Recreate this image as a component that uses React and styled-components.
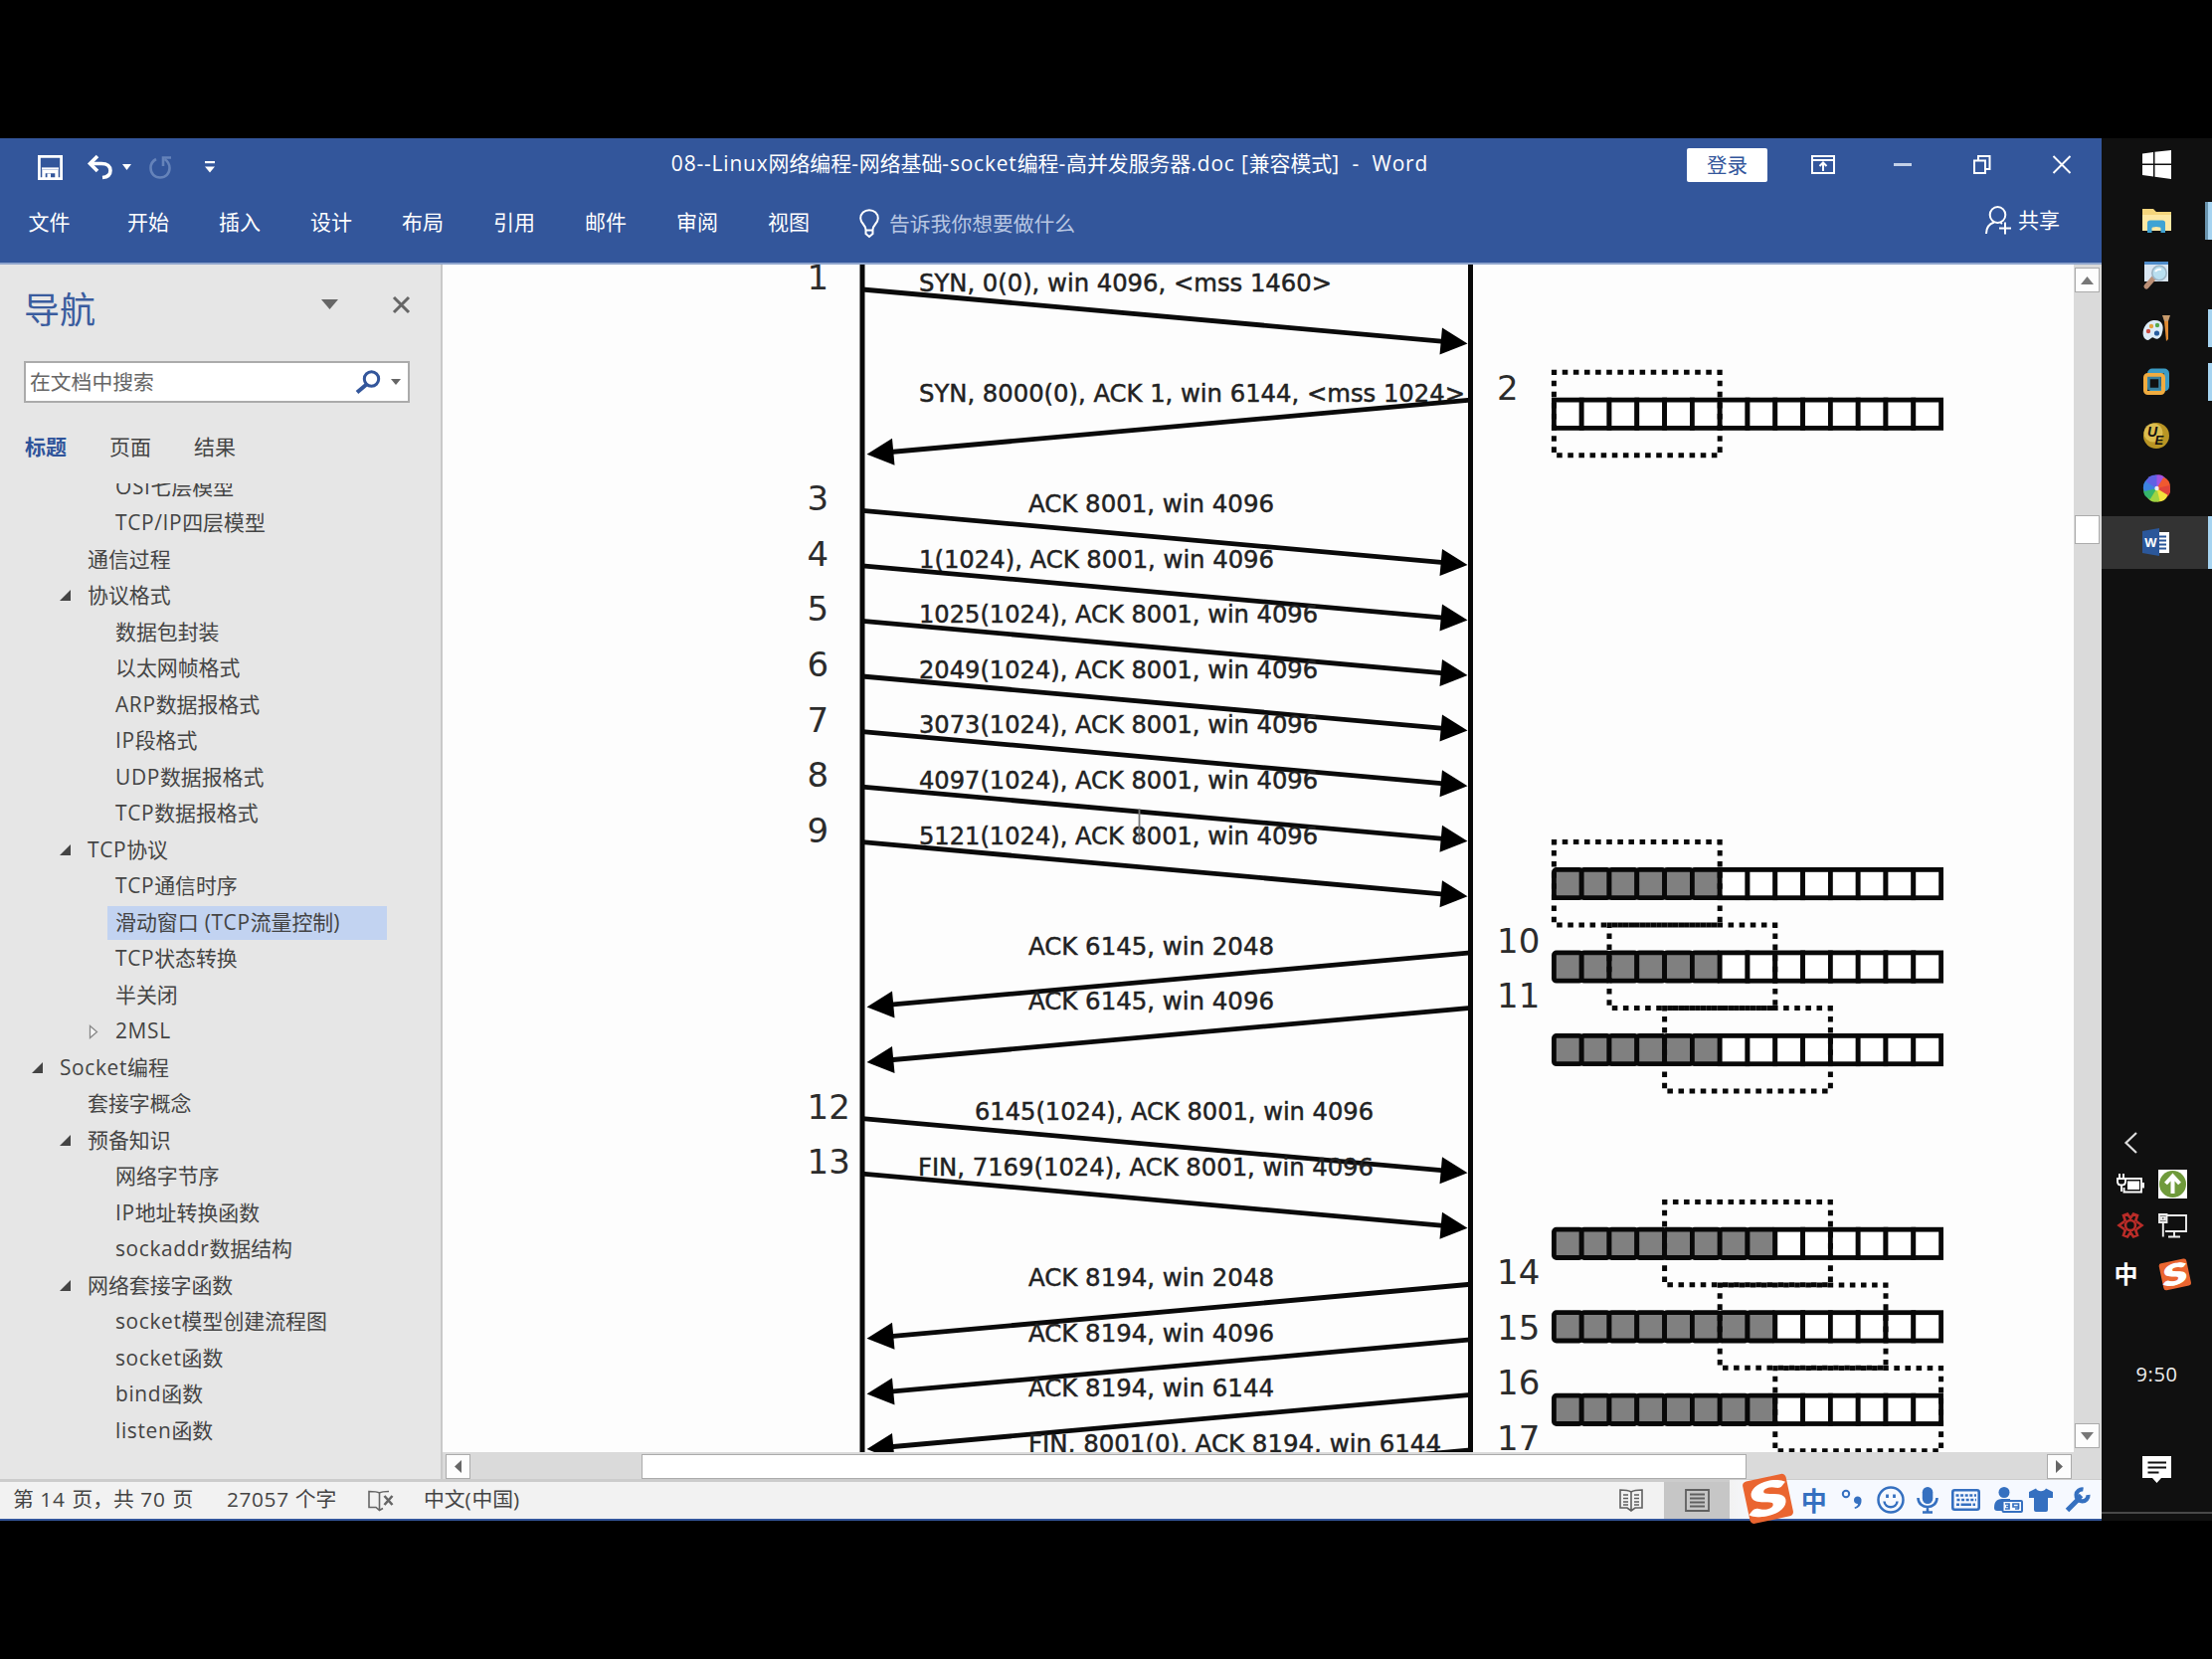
import React from "react";
import styled, { createGlobalStyle, css } from "styled-components";

const sans = `"Open Sans", "Noto Sans CJK SC", sans-serif`;

const Global = createGlobalStyle`
  * { box-sizing: border-box; }
  body { margin: 0; background: #000; font-family: ${sans}; }
  svg { display: block; flex: none; overflow: visible; }
`;

const Screen = styled.div`
  width: 2224px;
  height: 1668px;
  padding: 139px 0;
  background: #000;
  overflow: hidden;
`;

const Desktop = styled.div`
  display: flex;
  height: 1390px;
`;

const WordWindow = styled.div`
  width: 2113px;
  display: flex;
  flex-direction: column;
  border-bottom: 2px solid #33569b;
`;

/* ---------- mixed-script text ---------- */

const Latin = styled.span`
  letter-spacing: ${(p) => p.$track}px;
`;

const Mixed = ({ children, track = 0.65 }) =>
  children
    .split(/([\x20-\x7e]+)/)
    .filter(Boolean)
    .map((part, i) => (/[\x20-\x7e]/.test(part) ? <Latin key={i} $track={track}>{part}</Latin> : part));

/* ---------- header ---------- */

const Header = styled.header`
  height: 127px;
  background: #33569b;
  border-bottom: 2px solid #8fa5cd;
  color: #fff;
  flex: none;
`;

const TitleBar = styled.div`
  display: grid;
  grid-template-columns: 1fr auto 1fr;
  align-items: center;
  height: 60px;
`;

const QuickAccess = styled.div`
  display: flex;
  align-items: center;
  padding: 0 0 2px 38px;
`;

const Slot = styled.div`
  width: ${(p) => p.$w}px;
  display: flex;
  justify-content: ${(p) => p.$align || "flex-start"};
`;

const Title = styled.div`
  font-size: 20.9px;
  line-height: 30px;
  white-space: pre;
  padding: 0 2px 10px 0;
`;

const WindowTools = styled.div`
  display: flex;
  align-items: center;
  justify-content: flex-end;
  padding: 0 31px 7px 0;
`;

const LoginButton = styled.button`
  width: 81px;
  height: 34px;
  border: 0;
  border-radius: 2px;
  background: #fff;
  color: #33569b;
  font: 400 20.5px/32px ${sans};
  padding: 0;
  margin-right: 44px;
`;

const ToolGlyph = styled.div`
  width: 80px;
  &:last-child { width: 18px; margin-left: 3px; }
`;

const RibbonTabs = styled.nav`
  display: flex;
  align-items: center;
  height: 50px;
  padding: 0 0 2px 28.500px;
`;

const RibbonTab = styled.div`
  width: ${(p) => (p.$first ? 99.5 : 92)}px;
  font-size: 21px;
  line-height: 30px;
`;

const TellMe = styled.div`
  display: flex;
  align-items: center;
  gap: 10px;
  color: #b8c6e2;
  font-size: 20.8px;
  line-height: 30px;
  padding-top: 3px;
`;

const Share = styled.div`
  margin-left: auto;
  margin-right: 42px;
  display: flex;
  align-items: center;
  gap: 7px;
  font-size: 21px;
  line-height: 30px;
  padding-bottom: 4px;
`;

/* ---------- body ---------- */

const Body = styled.div`
  display: flex;
  flex: 1;
  min-height: 0;
`;

const NavPane = styled.aside`
  width: 445px;
  background: #e6e6e6;
  border-right: 2px solid #c9c9c9;
  display: flex;
  flex-direction: column;
  flex: none;
`;

const PaneHead = styled.div`
  display: flex;
  align-items: center;
  height: 97px;
  padding: 0 31px 6px 24px;
`;

const PaneTitle = styled.h2`
  margin: 0;
  flex: 1;
  font-size: 36px;
  font-weight: 400;
  line-height: 50px;
  color: #3a5c9e;
`;

const PaneTools = styled.div`
  display: flex;
  align-items: center;
  padding-bottom: 11px;
`;

const SearchBox = styled.div`
  display: flex;
  align-items: center;
  width: 388px;
  height: 42px;
  margin-left: 24px;
  padding: 0 7px 1px 4px;
  background: #fff;
  border: 2px solid #ababab;
  color: #666;
  font-size: 20.8px;
  line-height: 30px;
`;

const SearchText = styled.span`
  flex: 1;
`;

const PaneTabs = styled.div`
  display: flex;
  height: 81px;
  align-items: center;
  padding: 6px 0 0 25px;
  flex: none;
`;

const PaneTab = styled.div`
  width: 85px;
  font-size: 21px;
  line-height: 30px;
  color: ${(p) => (p.$active ? "#2f549b" : "#444")};
  font-weight: ${(p) => (p.$active ? 700 : 400)};
`;

const Tree = styled.ul`
  list-style: none;
  margin: 0;
  padding: 0;
  flex: 1;
  min-height: 0;
  overflow: hidden;
`;

const TreeRow = styled.li`
  display: flex;
  align-items: center;
  height: 36.5px;
  padding-left: ${(p) => p.$level * 28 + 4}px;
  &:first-child { margin-top: -14.5px; }
`;

const Marker = styled.span`
  width: 20px;
  display: flex;
  flex: none;
`;

const TreeLabel = styled.span`
  height: 34px;
  line-height: 32px;
  padding-left: 8px;
  font-size: 20.9px;
  color: #444;
  white-space: pre;
  ${(p) => p.$selected && css`
    width: 281px;
    background: #c2d3f1;
  `}
`;

const DocColumn = styled.div`
  flex: 1;
  display: flex;
  flex-direction: column;
  min-width: 0;
`;

const DocRow = styled.div`
  display: flex;
  height: 1194px;
  flex: none;
`;

const Page = styled.main`
  width: 1640px;
  background: #fdfdfd;
  overflow: hidden;
`;

const VScroll = styled.div`
  width: 28px;
  background: #dadada;
  display: flex;
  flex-direction: column;
  padding: 3px 1px 4px 1px;
`;

const ScrollButton = styled.div`
  width: 25px;
  height: 25px;
  background: #fdfdfd;
  border: 1.5px solid #ababab;
  display: flex;
  align-items: center;
  justify-content: center;
  flex: none;
`;

const VThumb = styled.div`
  width: 25px;
  height: 29px;
  margin: 224px 0 auto;
  background: #fff;
  border: 1.5px solid #ababab;
`;

const HScroll = styled.div`
  flex: 1;
  display: flex;
  align-items: center;
  background: #dadada;
  padding: 1px 30px 0 3px;
`;

const HThumb = styled.div`
  width: 1111px;
  height: 25px;
  margin: 0 auto 0 172px;
  background: #fff;
  border: 1.5px solid #ababab;
`;

/* ---------- status bar ---------- */

const StatusBar = styled.footer`
  display: flex;
  height: 40px;
  border-top: 3px solid #cccccc;
  background: #f2f2f2;
  color: #444;
  font-size: 20.8px;
  line-height: 30px;
  flex: none;
  padding-left: 13px;
  align-items: center;
`;

const StatusText = styled.span`
  white-space: pre;
  width: ${(p) => p.$w}px;
  padding-bottom: 3px;
`;

const ViewButton = styled.div`
  width: 66px;
  height: 37px;
  display: flex;
  align-items: center;
  justify-content: center;
  background: ${(p) => (p.$active ? "#c6c6c6" : "transparent")};
`;

const ImeBar = styled.div`
  width: 374px;
  height: 39px;
  margin-top: -2px;
  background: linear-gradient(90deg, #f2f2f2, #f6f9ff 30px);
  display: flex;
  align-items: center;
  padding-left: 12px;
`;

const ImeItem = styled.div`
  width: ${(p) => p.$w}px;
  display: flex;
  justify-content: center;
  color: #3570c0;
  font: 700 26px/30px "Noto Sans CJK SC", sans-serif;
  padding-bottom: ${(p) => p.$lift || 0}px;
`;

/* ---------- taskbar ---------- */

const Taskbar = styled.div`
  width: 111px;
  background: #101010;
  display: flex;
  flex-direction: column;
  flex: none;
`;

const TaskSlot = styled.div`
  height: ${(p) => p.$h || 53.8}px;
  display: flex;
  align-items: center;
  padding-left: 41px;
  padding-bottom: ${(p) => p.$lift || 0}px;
  justify-content: space-between;
  background: ${(p) => (p.$active ? "#333" : "transparent")};
`;

const Running = styled.i`
  width: ${(p) => p.$w || 4}px;
  height: ${(p) => p.$h || 38}px;
  background: #a5d3f0;
  border-left: ${(p) => (p.$w ? "3px solid #6a94ae" : 0)};
`;

const Tray = styled.div`
  margin-top: 557px;
  display: grid;
  grid-template-columns: 28px 29px;
  column-gap: 14px;
  padding-left: 15px;
  grid-template-rows: 40px 43px 41px 57px;
  align-items: center;
  justify-items: center;
`;

const TrayText = styled.span`
  color: #fff;
  font: 700 24px/30px "Noto Sans CJK SC", sans-serif;
  padding: 0 9px 2px 0;
`;

const TrayLogo = styled.span`
  padding-left: 4px;
`;

const Clock = styled.div`
  margin-top: 57px;
  text-align: center;
  color: #eee;
  font-size: 20px;
  letter-spacing: 0.6px;
  line-height: 30px;
`;

const Notice = styled.div`
  padding: 66px 0 0 41px;
  flex: 1;
`;

const ShowDesktop = styled.div`
  height: 9px;
  border-top: 2px solid #484848;
`;

/* ---------- small drawings ---------- */

const Caret = ({ w = 10, h = 6, fill = "#666", dir = "down" }) => {
  const pts = {
    down: `0,0 ${w},0 ${w / 2},${h}`,
    up: `0,${h} ${w},${h} ${w / 2},0`,
    left: `${w},0 ${w},${h} 0,${h / 2}`,
    right: `0,0 0,${h} ${w},${h / 2}`,
  };
  return <svg width={w} height={h}><polygon points={pts[dir]} fill={fill} /></svg>;
};

const SaveIcon = () => (
  <svg width="25" height="25" viewBox="0 0 25 25" fill="none" stroke="#fff" strokeWidth="2.8">
    <path d="M1.400 1.400H23.600V23.600H1.400Z" />
    <path d="M4 13.500H21" strokeWidth="2.200" />
    <path d="M6 23V16.500H19V23" strokeWidth="3.400" />
    <rect x="9.500" y="18.500" width="3.500" height="5" fill="#fff" stroke="none" />
  </svg>
);

const UndoIcon = () => (
  <svg width="25" height="24" viewBox="0 0 25 24" fill="none" stroke="#fff" strokeWidth="3.6">
    <path d="M2 8.500H14C20 8.500 23 11.500 23 15.500C23 19.500 20 22 15 22.500" />
    <path d="M10 1L2.500 8.500L10 16" />
  </svg>
);

const RedoIcon = () => (
  <svg width="22" height="24" viewBox="0 0 22 24" fill="none" stroke="#6583ba" strokeWidth="2.600">
    <path d="M7 4C3 6 1.500 9 1.500 13C1.500 18.500 5.500 22.500 11 22.500C16.500 22.500 20.500 18.500 20.500 13C20.500 9 18.500 6 15.500 4" />
    <path d="M14 11V2.500H22" />
  </svg>
);

const CustomizeIcon = () => (
  <svg width="10" height="12" viewBox="0 0 10 12" fill="#fff">
    <rect width="10" height="2.200" /><polygon points="0,5.500 10,5.500 5,11.500" />
  </svg>
);

const RibbonIcon = () => (
  <svg width="24" height="19" viewBox="0 0 24 19" fill="none" stroke="#fff" strokeWidth="2">
    <path d="M1 1H23V18H1Z M1 5H23 M12 16V8 M8.500 11L12 7.500L15.500 11" />
  </svg>
);
const MinIcon = () => <svg width="24" height="19"><rect x="3" y="8" width="18" height="3" fill="#c3d0e8" /></svg>;
const RestoreIcon = () => (
  <svg width="24" height="19" viewBox="0 0 24 19" fill="none" stroke="#fff" strokeWidth="2">
    <path d="M4 5.500H15V18H4Z M8 5V1H19.500V14H15.500" />
  </svg>
);
const CloseIcon = () => (
  <svg width="18" height="19" viewBox="0 0 18 19" stroke="#fff" strokeWidth="1.900"><path d="M0.500 1L17.500 18M17.500 1L0.500 18" /></svg>
);
const BulbIcon = () => (
  <svg width="20" height="29" viewBox="0 0 20 29" fill="none" stroke="#fff" strokeWidth="2">
    <path d="M6.500 21C6.500 16 1.200 14.500 1.200 9.500C1.200 4.500 5 1.200 10 1.200C15 1.200 18.800 4.500 18.800 9.500C18.800 14.500 13.500 16 13.500 21V25L10 28L6.500 25Z M6.500 21.500H13.500" />
  </svg>
);
const ShareIcon = () => (
  <svg width="26" height="29" viewBox="0 0 26 29" fill="none" stroke="#fff" strokeWidth="2">
    <ellipse cx="12.500" cy="9" rx="7.800" ry="8" />
    <path d="M9 16.500C4 18 1 22 1 28 M15.500 17L17 18 M14 22.500H26 M20 16.500V28.500" />
  </svg>
);
const PaneClose = () => (
  <svg width="17" height="17" viewBox="0 0 17 17" stroke="#666" strokeWidth="3"><path d="M1 1L16 16M16 1L1 16" /></svg>
);
const SearchIcon = () => (
  <svg width="26" height="24" viewBox="0 0 26 24" fill="none" stroke="#33569b" strokeWidth="3">
    <circle cx="16.500" cy="9" r="7.200" /><path d="M11.500 14.500L2 22.500" strokeWidth="4" />
  </svg>
);
const ProofIcon = () => (
  <svg width="26" height="22" viewBox="0 0 26 22" fill="none" stroke="#666" strokeWidth="1.600">
    <path d="M11.500 3V20M11.500 3C9 1.500 6 1.500 1 1.500V17.500H8L11.500 20.500L15 18.500M11.500 3C14 1.500 17 1.500 21 1.500" />
    <path d="M16.500 6L24.500 15M24.500 6L16.500 15" strokeWidth="2.600" />
  </svg>
);
const ReadIcon = () => (
  <svg width="24" height="23" viewBox="0 0 24 23" fill="none" stroke="#606060" strokeWidth="1.600">
    <path d="M12 3C9 1 5 1 1 1V19H8L12 22L16 19H23V1C19 1 15 1 12 3V22" />
    <path d="M4 6H9M4 9.500H9M4 13H9M15 6H20M15 9.500H20M15 13H20M4 16H9M15 16H20" />
  </svg>
);
const PrintIcon = () => (
  <svg width="25" height="23" viewBox="0 0 25 23" fill="none" stroke="#606060" strokeWidth="1.800">
    <path d="M1 1H24V22H1Z M5 5.500H20M5 9.500H20M5 13.500H20M5 17.500H20" />
  </svg>
);

const Expander = ({ state }) => {
  if (state === "open") return <svg width="12" height="12"><polygon points="11,0 11,11 0,11" fill="#444" /></svg>;
  if (state === "closed")
    return <svg width="10" height="15"><polygon points="2.500,1.500 9.500,7.500 2.500,13.500" fill="#f6f6f6" stroke="#888" strokeWidth="1.300" /></svg>;
  return null;
};

const SogouLogo = ({ size }) => (
  <svg width={size} height={size} viewBox="0 0 48 48">
    <g transform="rotate(-12 24 24)">
      <rect x="4" y="4" width="41" height="40" rx="4" fill="#ea6530" />
      <text x="24" y="38.500" textAnchor="middle" textLength="36" lengthAdjust="spacingAndGlyphs" fontFamily="Lato, sans-serif" fontWeight="900" fontStyle="italic" fontSize="41" fill="#fff" stroke="#fff" strokeWidth="1.500">S</text>
    </g>
  </svg>
);

const PunctIcon = () => (
  <svg width="22" height="24" viewBox="0 0 22 24">
    <circle cx="5" cy="6" r="3.200" fill="none" stroke="#3570c0" strokeWidth="2" />
    <path d="M13 12.500A3.800 3.800 0 1 1 20.500 13C20.500 17 18 20 14 21L13.500 19.500C16 18.500 17 17.500 17 16C14.500 16 13 14.500 13 12.500Z" fill="#3570c0" />
  </svg>
);
const SmileIcon = () => (
  <svg width="28" height="28" viewBox="0 0 28 28" fill="none" stroke="#3570c0" strokeWidth="2.500">
    <circle cx="14" cy="14" r="12.500" /><path d="M7.500 15.500C8 23 20 23 20.500 15.500" />
    <path d="M10.500 8.500V12M17.500 8.500V12" strokeWidth="2.800" />
  </svg>
);
const MicIcon = () => (
  <svg width="22" height="28" viewBox="0 0 22 28" fill="none" stroke="#3570c0" strokeWidth="2.600">
    <rect x="5.800" y="1" width="10.500" height="17" rx="5.200" fill="#3570c0" stroke="none" />
    <path d="M1.500 12C1.500 24 20.500 24 20.500 12M11 21V26M6 26.500H16" />
  </svg>
);
const KeyboardIcon = () => (
  <svg width="29" height="22" viewBox="0 0 29 22" fill="none" stroke="#3570c0" strokeWidth="2.600">
    <rect x="1.300" y="1.300" width="26.400" height="19.400" rx="2" />
    <path d="M4.500 6.500H25M5.500 11H25" strokeDasharray="3 1.600" /><path d="M5 15.800H24" strokeDasharray="3 1.500 10.500 1.500 3" />
  </svg>
);
const PersonCardIcon = () => (
  <svg width="30" height="26" viewBox="0 0 30 26" fill="#3570c0">
    <circle cx="11" cy="5.500" r="5.500" /><path d="M1 21C1 13 5 12 11 12H17V24H4Q1 24 1 21Z" />
    <rect x="9.500" y="14" width="19.500" height="11" rx="1" fill="#f6f9ff" stroke="#3570c0" strokeWidth="2" />
    <path d="M12 17H16V22H12M13 19.500H16M25.500 22V17H20V20H25M26 22H22" fill="none" stroke="#3570c0" strokeWidth="1.700" />
  </svg>
);
const ShirtIcon = () => (
  <svg width="24" height="24" viewBox="0 0 24 24" fill="#3570c0">
    <path d="M7 0.500C8.500 4 15.500 4 17 0.500L24 4V10H19V22Q19 24 17 24H7Q5 24 5 22V10H0V4Z" />
  </svg>
);
const WrenchIcon = () => (
  <svg width="26" height="26" viewBox="0 0 26 26" fill="none" stroke="#3570c0">
    <path d="M2.500 23.500L14 12" strokeWidth="5" /><path d="M18.500 2.500A6 6 0 1 0 23.500 8" strokeWidth="4.200" />
    <path d="M13 8.500L16.500 12" strokeWidth="5" />
  </svg>
);

const WindowsIcon = () => (
  <svg width="29" height="29" viewBox="0 0 29 29" fill="#fff">
    <path d="M0 3.500L11 2V13.500H0ZM12.500 1.800L29 0V13.500H12.500ZM0 15H11V26.500L0 25ZM12.500 15H29V29L12.500 26.800Z" />
  </svg>
);
const ExplorerIcon = () => (
  <svg width="29" height="26" viewBox="0 0 29 26">
    <path d="M0 1H11L14 4H29V23H0Z" fill="#f4d57c" /><rect y="7" width="29" height="16" fill="#fde8a4" />
    <path d="M5 15Q5 12.500 8 12.500H20Q23 12.500 23 15V25H18.500V20.500Q18.500 19 14 19Q9.500 19 9.500 20.500V25H5Z" fill="#3fa3d4" />
  </svg>
);
const InspectorIcon = () => (
  <svg width="29" height="29" viewBox="0 0 29 29">
    <rect x="2" y="1" width="24" height="20" fill="#d9e6f2" /><rect x="2" y="1" width="24" height="3" fill="#4e8ccb" />
    <path d="M11 18L4 26" stroke="#bb8f76" strokeWidth="5" strokeLinecap="round" />
    <circle cx="17" cy="12.500" r="7.200" fill="#b9dff0" stroke="#9db4c4" strokeWidth="1.600" /><path d="M13 11Q15 8 19 9" stroke="#fff" strokeWidth="2" fill="none" />
  </svg>
);
const PaintIcon = () => (
  <svg width="29" height="28" viewBox="0 0 29 28">
    <path d="M11 6C20 5 22 12 20 18C19 24 15 26 12 24C10 22 9 24 6 26C1 26 -1 19 2 13C4 9 7 6.500 11 6Z" fill="#dcebf7" />
    <circle cx="9" cy="12" r="2.200" fill="#e5a13c" /><circle cx="15" cy="11" r="2.200" fill="#55a84c" /><circle cx="6" cy="17" r="2.200" fill="#cb4c42" /><circle cx="14.500" cy="19" r="2.600" fill="#285d9f" />
    <path d="M20 1H28L26 7H22Z" fill="#c79a6b" /><path d="M22 7H26V25L24 27Z" fill="#e08b34" />
  </svg>
);
const VmIcon = () => (
  <svg width="28" height="28" viewBox="0 0 28 28" fill="none" strokeWidth="4">
    <rect x="7.500" y="3" width="17" height="18" rx="2.500" stroke="#3b9bc4" strokeWidth="5" />
    <rect x="3" y="7" width="18" height="18" rx="2.500" stroke="#f0ac40" /><rect x="6.500" y="10" width="11" height="11" fill="#111" stroke="#39809e" strokeWidth="2.500" />
  </svg>
);
const UltraEditIcon = () => (
  <svg width="28" height="28" viewBox="0 0 28 28">
    <circle cx="14" cy="14" r="13" fill="#b99524" /><circle cx="11" cy="11" r="9.500" fill="#e9cf62" opacity="0.700" />
    <text x="5" y="15" fontFamily="Liberation Sans, sans-serif" fontWeight="700" fontStyle="italic" fontSize="14" fill="#111">U</text>
    <text x="12.500" y="23" fontFamily="Liberation Sans, sans-serif" fontWeight="700" fontStyle="italic" fontSize="13" fill="#111">E</text>
  </svg>
);
const petals = ["#a353e0", "#f0592f", "#e0443a", "#f4e23c", "#9fd442", "#35b56b", "#3c83e0", "#5f62e4"];
const PinwheelIcon = () => (
  <svg width="29" height="28" viewBox="-14.500 -14 29 28">
    {petals.map((c, i) => <path key={c} d="M0 0L-3 -12.500Q4 -16 9.500 -9.500Z" fill={c} transform={`rotate(${i * 45})`} />)}
    <circle r="2.200" fill="#eee" />
  </svg>
);
const WordIcon = () => (
  <svg width="28" height="28" viewBox="0 0 28 28">
    <rect x="13" y="4" width="14" height="21" fill="#fff" /><path d="M17 8.500H24M17 12.500H24M17 16.500H24M17 20.500H24" stroke="#2b579a" strokeWidth="1.800" />
    <path d="M0 3L17 0V28L0 25Z" fill="#2b579a" />
    <text x="8.500" y="19" textAnchor="middle" fontFamily="Liberation Sans, sans-serif" fontWeight="700" fontSize="13" fill="#fff">W</text>
  </svg>
);
const ChevronIcon = () => <svg width="13" height="22" viewBox="0 0 13 22" fill="none" stroke="#ddd" strokeWidth="2.200"><path d="M12 1L1.500 11L12 21" /></svg>;
const BatteryIcon = () => (
  <svg width="28" height="20" viewBox="0 0 28 20" fill="none" stroke="#fff" strokeWidth="1.900">
    <path d="M9 5H25V18.500H7.500V14" /><rect x="11" y="7.500" width="12" height="8.500" fill="#fff" stroke="none" /><path d="M27 9V14.500" />
    <path d="M1 5H9V8C9 11 7.500 11.500 5 11.500C2.500 11.500 1 11 1 8ZM3 5V0M7 5V0M5 12V18" />
  </svg>
);
const UpdateIcon = () => (
  <svg width="29" height="29" viewBox="0 0 29 29">
    <rect width="29" height="29" fill="#fff" /><circle cx="14.500" cy="14.500" r="13.500" fill="#6f9a3b" />
    <path d="M14.500 24V8M7.500 14L14.500 6.500L21.500 14" fill="none" stroke="#fff" strokeWidth="4" />
  </svg>
);
const RedIcon = () => (
  <svg width="26" height="26" viewBox="0 0 26 26" fill="none" stroke="#b92c28" strokeWidth="2.600">
    <circle cx="13" cy="13" r="5" /><path d="M8 9L6 3L10 1.500L13 6L16 1.500L20 3L18 9M8 17L6 23L10 24.500L13 20L16 24.500L20 23L18 17M7 9L1.500 13L7 17M19 9L24.500 13L19 17" />
  </svg>
);
const MonitorIcon = () => (
  <svg width="29" height="25" viewBox="0 0 29 25" fill="none" stroke="#eee" strokeWidth="1.900">
    <path d="M9 2H28V18H7" /><path d="M1 1H8.500V9H1Z M3 3.500H6.500V6.500H3Z M4.800 9V23.500M16 18V23M10 23.500H22" />
  </svg>
);
const NoticeIcon = () => (
  <svg width="29" height="29" viewBox="0 0 29 29">
    <path d="M0 1H29V23H19L14.500 28L10 23H0Z" fill="#fff" /><path d="M5.500 7.500H24M5.500 12.500H24M5.500 17.500H16.500" stroke="#111" strokeWidth="1.800" />
  </svg>
);

/* ---------- diagram ---------- */

const LEFT = 867;
const RIGHT = 1478.5;
const STEP = 55.57;
const yAt = (n) => 291 + STEP * n;

const messages = [
  { n: 1, row: 0, text: "SYN, 0(0), win 4096, <mss 1460>", x: 924, end: 1339 },
  { n: 2, row: 2, text: "SYN, 8000(0), ACK 1, win 6144, <mss 1024>", x: 924, end: 1473, back: true },
  { n: 3, row: 4, text: "ACK 8001, win 4096", x: 1034, end: 1281 },
  { n: 4, row: 5, text: "1(1024), ACK 8001, win 4096", x: 924, end: 1281 },
  { n: 5, row: 6, text: "1025(1024), ACK 8001, win 4096", x: 924, end: 1325 },
  { n: 6, row: 7, text: "2049(1024), ACK 8001, win 4096", x: 924, end: 1325 },
  { n: 7, row: 8, text: "3073(1024), ACK 8001, win 4096", x: 924, end: 1325 },
  { n: 8, row: 9, text: "4097(1024), ACK 8001, win 4096", x: 924, end: 1325 },
  { n: 9, row: 10, text: "5121(1024), ACK 8001, win 4096", x: 924, end: 1325 },
  { n: 10, row: 12, text: "ACK 6145, win 2048", x: 1034, end: 1281, back: true },
  { n: 11, row: 13, text: "ACK 6145, win 4096", x: 1034, end: 1281, back: true },
  { n: 12, row: 15, text: "6145(1024), ACK 8001, win 4096", x: 980, end: 1381 },
  { n: 13, row: 16, text: "FIN, 7169(1024), ACK 8001, win 4096", x: 923, end: 1381 },
  { n: 14, row: 18, text: "ACK 8194, win 2048", x: 1034, end: 1281, back: true },
  { n: 15, row: 19, text: "ACK 8194, win 4096", x: 1034, end: 1281, back: true },
  { n: 16, row: 20, text: "ACK 8194, win 6144", x: 1034, end: 1281, back: true },
  { n: 17, row: 21, text: "FIN, 8001(0), ACK 8194, win 6144", x: 1034, end: 1449, back: true },
];

const windows = [
  { y: 374.3, filled: 0, from: 0 },
  { y: 846.6, filled: 6, from: 0 },
  { y: 930.1, filled: 6, from: 2 },
  { y: 1013.6, filled: 6, from: 4 },
  { y: 1208.4, filled: 8, from: 4 },
  { y: 1291.9, filled: 8, from: 6 },
  { y: 1375.4, filled: 8, from: 8 },
];

const CELL = 27.8;
const BAR_X = 1562.4;

const DiagramSvg = styled.svg`
  overflow: hidden;
  font-family: "DejaVu Sans", sans-serif;
`;

const StepNumber = styled.text`
  font-size: 34px;
  fill: #2c2c2c;
`;

const MessageText = styled.text`
  font-size: 25.5px;
  fill: #222;
  stroke: #222;
  stroke-width: 0.5px;
`;

const Message = ({ n, row, text, x, end, back }) => {
  const y = yAt(row);
  const ty = y + 54.6;
  const tip = back ? 871.5 : 1475.5;
  const dir = back ? -1 : 1;
  const base = tip - dir * 27;
  const baseY = ty - 2.5;
  return (
    <g>
      <StepNumber x={back ? 1505 : 811.5} y={y}>{n}</StepNumber>
      <MessageText x={x} y={y + 1.8} textLength={end - x} lengthAdjust="spacingAndGlyphs">{text}</MessageText>
      <line x1={back ? RIGHT : LEFT} y1={y} x2={base + dir * 6} y2={baseY + 0.5} stroke="#0a0a0a" strokeWidth="4.800" />
      <polygon points={`${tip},${ty} ${base + dir * 1.5},${baseY - 13.5} ${base - dir},${baseY + 13.5}`} fill="#000" />
    </g>
  );
};

const WindowBar = ({ y, filled, from }) => (
  <g fill="none" stroke="#080808" strokeWidth="4.800">
    {Array.from({ length: 14 }, (_, i) => (
      <rect key={i} x={BAR_X + i * CELL} y={y + CELL} width={CELL} height={CELL + 0.5}
        rx={i < filled ? 2.5 : 0} fill={i < filled ? "#808080" : "#fff"} />
    ))}
    <rect x={BAR_X + from * CELL} y={y} width={CELL * 6} height={CELL * 3} strokeWidth="5" strokeDasharray="5.560 5.560" strokeDashoffset="2.780" />
  </g>
);

const Diagram = () => (
  <DiagramSvg width="1640" height="1194" viewBox="445 266 1640 1194">
    <path d={`M${LEFT} 260V1460M${RIGHT} 260V1460`} stroke="#080808" strokeWidth="5" />
    {messages.map((m) => <Message key={m.n} {...m} />)}
    {windows.map((w) => <WindowBar key={w.y} {...w} />)}
    <path d="M1145.500 813V847" stroke="#777" strokeWidth="1.800" />
  </DiagramSvg>
);

/* ---------- data ---------- */

const ribbonTabs = ["文件", "开始", "插入", "设计", "布局", "引用", "邮件", "审阅", "视图"];

const outline = [
  [3, "OSI七层模型"], [3, "TCP/IP四层模型"], [2, "通信过程"], [2, "协议格式", "open"],
  [3, "数据包封装"], [3, "以太网帧格式"], [3, "ARP数据报格式"], [3, "IP段格式"], [3, "UDP数据报格式"], [3, "TCP数据报格式"],
  [2, "TCP协议", "open"], [3, "TCP通信时序"], [3, "滑动窗口 (TCP流量控制)", null, true], [3, "TCP状态转换"], [3, "半关闭"],
  [3, "2MSL", "closed"], [1, "Socket编程", "open"], [2, "套接字概念"], [2, "预备知识", "open"],
  [3, "网络字节序"], [3, "IP地址转换函数"], [3, "sockaddr数据结构"], [2, "网络套接字函数", "open"],
  [3, "socket模型创建流程图"], [3, "socket函数"], [3, "bind函数"], [3, "listen函数"],
];

export default function App() {
  return (
    <Screen>
      <Global />
      <Desktop>
        <WordWindow>
          <Header>
            <TitleBar>
              <QuickAccess>
                <Slot $w={50}><SaveIcon /></Slot>
                <Slot $w={35}><UndoIcon /></Slot>
                <Slot $w={27}><Caret w={9} h={6} fill="#fff" /></Slot>
                <Slot $w={56}><RedoIcon /></Slot>
                <CustomizeIcon />
              </QuickAccess>
              <Title><Mixed track={0.85}>08--Linux网络编程-网络基础-socket编程-高并发服务器.doc [兼容模式]  -  Word</Mixed></Title>
              <WindowTools>
                <LoginButton>登录</LoginButton>
                <ToolGlyph><RibbonIcon /></ToolGlyph>
                <ToolGlyph><MinIcon /></ToolGlyph>
                <ToolGlyph><RestoreIcon /></ToolGlyph>
                <ToolGlyph><CloseIcon /></ToolGlyph>
              </WindowTools>
            </TitleBar>
            <RibbonTabs>
              {ribbonTabs.map((t, i) => <RibbonTab key={t} $first={i === 0}>{t}</RibbonTab>)}
              <TellMe><BulbIcon />告诉我你想要做什么</TellMe>
              <Share><ShareIcon />共享</Share>
            </RibbonTabs>
          </Header>
          <Body>
            <NavPane>
              <PaneHead>
                <PaneTitle>导航</PaneTitle>
                <PaneTools>
                  <Slot $w={72}><Caret w={17} h={10} /></Slot>
                  <PaneClose />
                </PaneTools>
              </PaneHead>
              <SearchBox>
                <SearchText>在文档中搜索</SearchText>
                <Slot $w={36}><SearchIcon /></Slot>
                <Caret w={10} h={6} />
              </SearchBox>
              <PaneTabs>
                <PaneTab $active>标题</PaneTab>
                <PaneTab>页面</PaneTab>
                <PaneTab>结果</PaneTab>
              </PaneTabs>
              <Tree>
                {outline.map(([level, label, state, selected]) => (
                  <TreeRow key={label} $level={level}>
                    <Marker><Expander state={state} /></Marker>
                    <TreeLabel $selected={selected}><Mixed>{label}</Mixed></TreeLabel>
                  </TreeRow>
                ))}
              </Tree>
            </NavPane>
            <DocColumn>
              <DocRow>
                <Page><Diagram /></Page>
                <VScroll>
                  <ScrollButton><Caret w={13} h={8} dir="up" fill="#777" /></ScrollButton>
                  <VThumb />
                  <ScrollButton><Caret w={13} h={8} fill="#777" /></ScrollButton>
                </VScroll>
              </DocRow>
              <HScroll>
                <ScrollButton><Caret w={7} h={13} dir="left" fill="#666" /></ScrollButton>
                <HThumb />
                <ScrollButton><Caret w={7} h={13} dir="right" fill="#666" /></ScrollButton>
              </HScroll>
            </DocColumn>
          </Body>
          <StatusBar>
            <StatusText $w={215}><Mixed track={1}>第 14 页，共 70 页</Mixed></StatusText>
            <StatusText $w={142}><Mixed>27057 个字</Mixed></StatusText>
            <Slot $w={56}><ProofIcon /></Slot>
            <StatusText $w={1181}><Mixed>中文(中国)</Mixed></StatusText>
            <ViewButton><ReadIcon /></ViewButton>
            <ViewButton $active><PrintIcon /></ViewButton>
            <ImeBar>
              <ImeItem $w={53} $lift={2}><SogouLogo size={52} /></ImeItem>
              <ImeItem $w={42}>中</ImeItem>
              <ImeItem $w={36}><PunctIcon /></ImeItem>
              <ImeItem $w={42}><SmileIcon /></ImeItem>
              <ImeItem $w={35}><MicIcon /></ImeItem>
              <ImeItem $w={43}><KeyboardIcon /></ImeItem>
              <ImeItem $w={42}><PersonCardIcon /></ImeItem>
              <ImeItem $w={26}><ShirtIcon /></ImeItem>
              <ImeItem $w={49}><WrenchIcon /></ImeItem>
            </ImeBar>
          </StatusBar>
        </WordWindow>
        <Taskbar>
          <TaskSlot $h={54} $lift={2}><WindowsIcon /></TaskSlot>
          <TaskSlot $h={57}><ExplorerIcon /><Running $w={7} /></TaskSlot>
          <TaskSlot><InspectorIcon /></TaskSlot>
          <TaskSlot $lift={1}><PaintIcon /><Running /></TaskSlot>
          <TaskSlot><VmIcon /><Running /></TaskSlot>
          <TaskSlot><UltraEditIcon /></TaskSlot>
          <TaskSlot $lift={2}><PinwheelIcon /></TaskSlot>
          <TaskSlot $active $h={53}><WordIcon /><Running $h={53} /></TaskSlot>
          <Tray>
            <ChevronIcon /><span />
            <BatteryIcon /><UpdateIcon />
            <RedIcon /><MonitorIcon />
            <TrayText>中</TrayText><TrayLogo><SogouLogo size={33} /></TrayLogo>
          </Tray>
          <Clock>9:50</Clock>
          <Notice><NoticeIcon /></Notice>
          <ShowDesktop />
        </Taskbar>
      </Desktop>
    </Screen>
  );
}
